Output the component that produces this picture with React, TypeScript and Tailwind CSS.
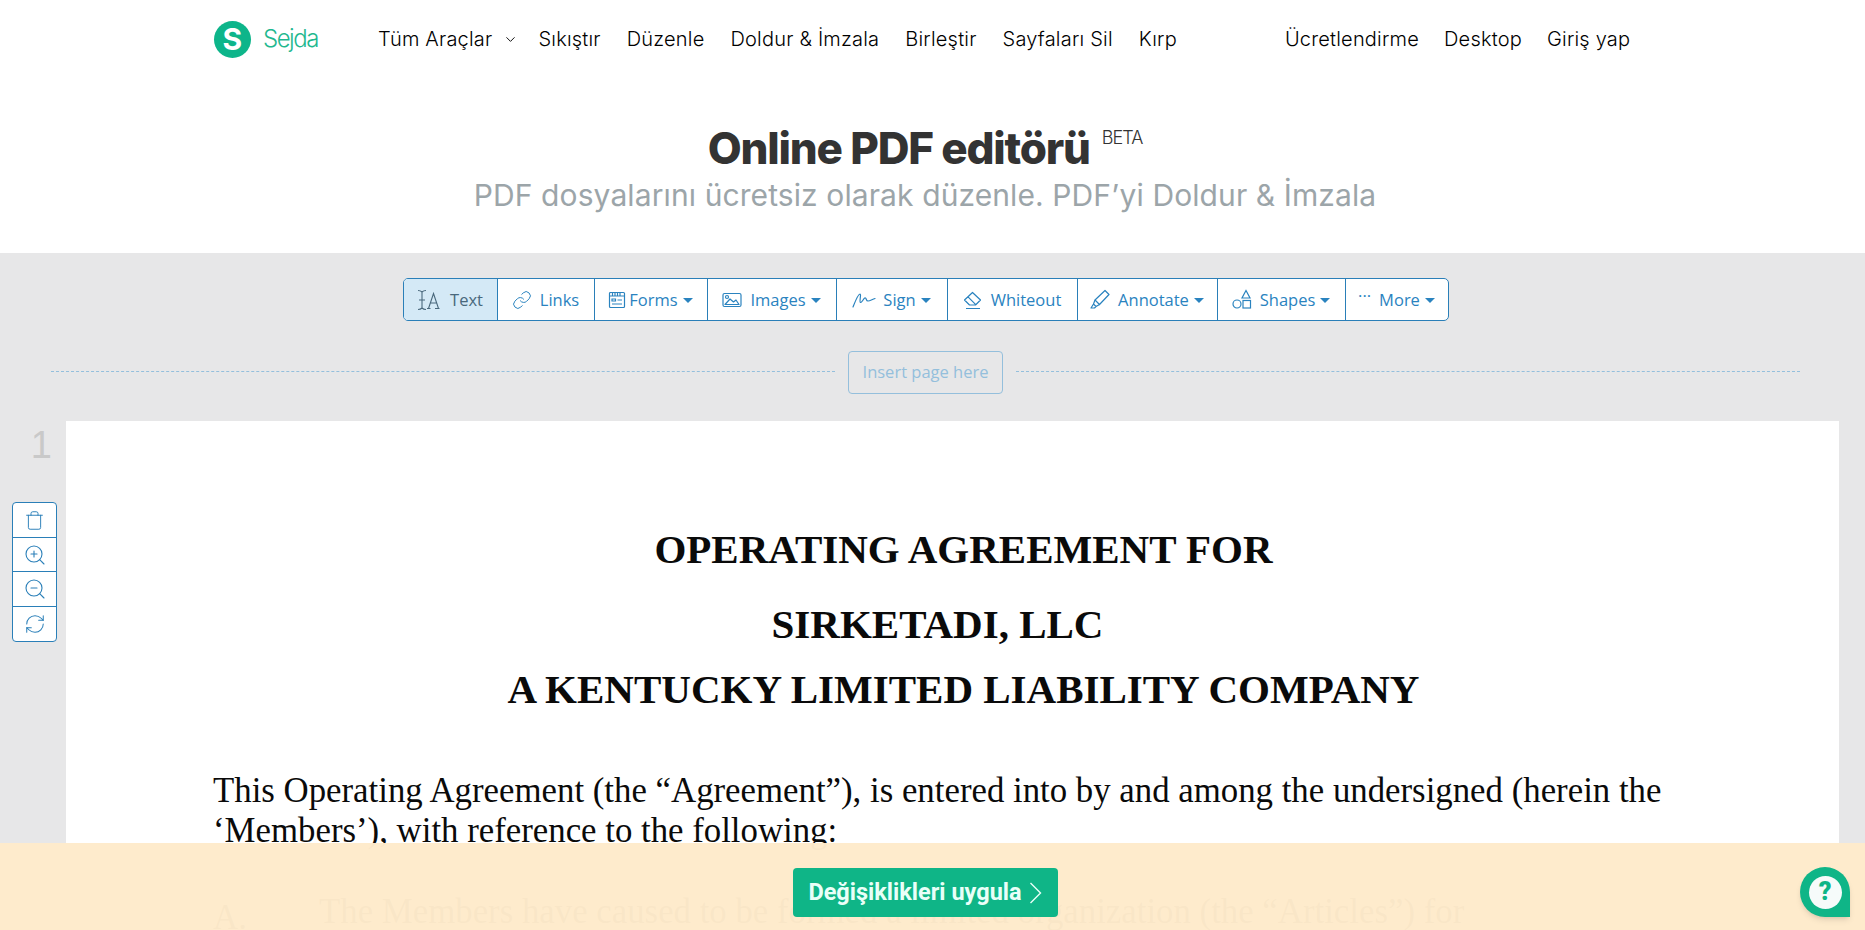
import { ChevronDown, Link as LinkIcon, RefreshCw, Trash, ZoomIn, ZoomOut } from "lucide-react";
import type { ReactNode } from "react";

const navLinks = ["Sıkıştır", "Düzenle", "Doldur & İmzala", "Birleştir", "Sayfaları Sil", "Kırp"];
const rightLinks = ["Ücretlendirme", "Desktop", "Giriş yap"];

const TextIcon = () => (
  <svg width="23" height="22" viewBox="0 0 23 22" fill="none" stroke="currentColor" strokeWidth="1.100">
    <path d="M1 1.500c2 0 3 .5 4 1.500 1-1 2-1.500 4-1.500M5 3v16M1 20.500c2 0 3-.5 4-1.500 1 1 2 1.500 4 1.500M2 11h6" />
    <path d="M10 19.500h3.500M18 19.500h4.500M11.500 19.500l5-15 5 15M13.200 14h6.600" />
  </svg>
);

const FormsIcon = () => (
  <svg width="18" height="18" viewBox="0 0 18 18" fill="none" stroke="currentColor" strokeWidth="1.200">
    <rect x="1.500" y="1.500" width="15" height="15" rx="1" />
    <path d="M1.500 5h15M4.500 1.500V5M7 1.500V5M9.500 1.500V5M12 1.500V5M4 8h3.500v2H4zM9.500 9H14M4 13h10" />
  </svg>
);

const ImagesIcon = () => (
  <svg width="20" height="16" viewBox="0 0 20 16" fill="none" stroke="currentColor" strokeWidth="1.200" strokeLinejoin="round">
    <rect x="1" y="1.500" width="18" height="13" rx="1.500" />
    <circle cx="5" cy="5" r="1.500" />
    <path d="M3 12.500 8 7l3.500 3 2.500-2 3 4.500z" />
  </svg>
);

const SignIcon = () => (
  <svg width="24" height="18" viewBox="0 0 24 18" fill="none" stroke="currentColor" strokeWidth="1.200" strokeLinecap="round">
    <path d="M1 16C3 11 6 3 8 3c1.500 0-1 8 .5 8.500C10 12 12 6 13.500 7c1 .5.5 3 2.500 3 2 0 4-1.500 7-2.500" />
  </svg>
);

const EraserIcon = () => (
  <svg width="20" height="20" viewBox="0 0 20 20" fill="none" stroke="currentColor" strokeWidth="1.200" strokeLinejoin="round">
    <path d="M1.500 10 9.500 2.500l8 7.500-5 5H6.500zM5 6.800l8 8M3 18.500h14" />
  </svg>
);

const PenIcon = () => (
  <svg width="20" height="21" viewBox="0 0 20 21" fill="none" stroke="currentColor" strokeWidth="1.200" strokeLinejoin="round">
    <path d="M15 1.500 19 5.500 9.500 15.500 5 11z" />
    <path d="M5 11 3.500 15l2.500 2.500 3.500-2M3.500 15 1 19h3.500l1.500-1.500" />
  </svg>
);

const ShapesIcon = () => (
  <svg width="21" height="21" viewBox="0 0 21 21" fill="none" stroke="currentColor" strokeWidth="1.200">
    <path d="M14 1.500 18 9h-8z" />
    <circle cx="5" cy="15" r="4" />
    <rect x="11" y="11.500" width="7.500" height="7.500" />
  </svg>
);

const Caret = () => (
  <span className="ml-[5px] inline-block h-0 w-0 border-x-[5px] border-t-[5px] border-x-transparent border-t-[#2a83bf]" />
);

type ToolProps = {
  icon: ReactNode;
  label: string;
  gap: string;
  width: string;
  caret?: boolean;
  active?: boolean;
};

const Tool = ({ icon, label, gap, width, caret, active }: ToolProps) => (
  <div
    className={`flex h-full items-center justify-center border-r border-[#2a7fb8] last:border-r-0 ${gap} ${width} ${
      active ? "bg-[#d4e9f6] text-[#49687c]" : "text-[#2a83bf]"
    }`}
  >
    {icon}
    <span className="flex items-center pt-[2px]">
      {label}
      {caret && <Caret />}
    </span>
  </div>
);

const App = () => {
  return (
    <div className="relative h-[930px] w-full overflow-hidden bg-white font-['Inter',sans-serif]">
      <nav className="flex h-[78px] items-center pl-[214px] text-[20px] font-light tracking-[0.2px] text-black">
        <div className="flex w-[164px] items-center gap-[12px]">
          <div className="flex h-[37px] w-[37px] items-center justify-center rounded-full bg-[#0db58a] text-[30px] font-bold text-white">
            S
          </div>
          <span className="text-[24px] tracking-[-1.500px] text-[#1fb88f]">Sejda</span>
        </div>
        <div className="flex items-center gap-[11px]">
          <span>Tüm Araçlar</span>
          <ChevronDown size={15} strokeWidth={1.500} />
        </div>
        <div className="ml-[20px] flex gap-[26px]">
          {navLinks.map((link) => (
            <span key={link}>{link}</span>
          ))}
        </div>
        <div className="ml-[108px] flex gap-[25px]">
          {rightLinks.map((link) => (
            <span key={link}>{link}</span>
          ))}
        </div>
      </nav>

      <div className="flex h-[175px] flex-col items-center pt-[45px] pr-[15px]">
        <div className="flex items-start">
          <h1 className="text-[44px] leading-[50px] font-extrabold tracking-[-1.200px] text-[#333]">Online PDF editörü</h1>
          <span className="mt-[1px] ml-[12px] text-[18px] font-light tracking-[-1px] text-[#333]">BETA</span>
        </div>
        <p className="mt-[2px] text-[30px] leading-[40px] tracking-[0.1px] text-[#9ca5a9]">PDF dosyalarını ücretsiz olarak düzenle. PDF’yi Doldur &amp; İmzala</p>
      </div>

      <div className="h-[677px] bg-[#e7e7e8] font-['Open_Sans',sans-serif]">
        <div className="flex justify-center pt-[25px] pr-[14px]">
          <div className="flex h-[43px] items-center overflow-hidden rounded-[5px] border border-[#2a7fb8] bg-white text-[16.500px]">
            <Tool active icon={<TextIcon />} label="Text" gap="gap-[10px]" width="w-[94px]" />
            <Tool icon={<LinkIcon size={20} strokeWidth={1.200} />} label="Links" gap="gap-[8px]" width="w-[97px]" />
            <Tool icon={<FormsIcon />} label="Forms" gap="gap-[3px]" width="w-[113px]" caret />
            <Tool icon={<ImagesIcon />} label="Images" gap="gap-[8px]" width="w-[129px]" caret />
            <Tool icon={<SignIcon />} label="Sign" gap="gap-[7px]" width="w-[111px]" caret />
            <Tool icon={<EraserIcon />} label="Whiteout" gap="gap-[8px]" width="w-[130px]" />
            <Tool icon={<PenIcon />} label="Annotate" gap="gap-[8px]" width="w-[140px]" caret />
            <Tool icon={<ShapesIcon />} label="Shapes" gap="gap-[7px]" width="w-[128px]" caret />
            <Tool icon={<span className="mb-[6px]">···</span>} label="More" gap="gap-[8px]" width="w-[102px]" caret />
          </div>
        </div>

        <div className="mt-[30px] flex items-center pr-[65px] pl-[51px]">
          <div className="mb-[2px] flex-1 border-t border-dashed border-[#94bfdc]" />
          <div className="mx-[13px] flex h-[43px] w-[155px] items-center justify-center rounded-[4px] border border-[#94bfdc] text-[16.500px] text-[#94bfdc]">
            Insert page here
          </div>
          <div className="mb-[2px] flex-1 border-t border-dashed border-[#94bfdc]" />
        </div>

        <div className="mt-[27px] flex">
          <div className="flex w-[66px] shrink-0 flex-col items-end">
            <span className="mt-[2px] mr-[14px] h-[44px] font-['Liberation_Sans',sans-serif] text-[38px] leading-[44px] text-[#c9c9c9]">1</span>
            <div className="mt-[35px] mr-[9px] flex w-[45px] flex-col rounded-[4px] border border-[#2a7fb8] bg-white text-[#2a7fb8]">
              <div className="flex h-[35px] items-center justify-center border-b border-[#2a7fb8]">
                <Trash size={21} strokeWidth={1.100} />
              </div>
              <div className="flex h-[34px] items-center justify-center border-b border-[#2a7fb8]">
                <ZoomIn size={24} strokeWidth={1.100} />
              </div>
              <div className="flex h-[35px] items-center justify-center border-b border-[#2a7fb8]">
                <ZoomOut size={24} strokeWidth={1.100} />
              </div>
              <div className="flex h-[34px] items-center justify-center">
                <RefreshCw size={22} strokeWidth={1.100} />
              </div>
            </div>
          </div>

          <div className="h-[600px] w-[1773px] bg-white pt-[105px] pl-[22px] font-['Liberation_Serif',serif] text-[#0a0a0a]">
            <div className="text-center text-[41px] leading-[46px] font-bold">
              <p>OPERATING AGREEMENT FOR</p>
              <p className="mt-[29px] pr-[52px]">SIRKETADI, LLC</p>
              <p className="mt-[19px]">A KENTUCKY LIMITED LIABILITY COMPANY</p>
            </div>
            <div className="mt-[59px] pl-[125px] text-[34.800px] leading-[40px]">
              <p>This Operating Agreement (the “Agreement”), is entered into by and among the undersigned (herein the</p>
              <p>‘Members’), with reference to the following:</p>
              <div className="mt-[41px] flex">
                <span className="mt-[6px] w-[106px]">A.</span>
                <p>The Members have caused to be formed a limited organization (the “Articles”) for</p>
              </div>
            </div>
          </div>
        </div>
      </div>

      <div className="absolute inset-x-0 bottom-0 flex h-[87px] items-center justify-center bg-[#feebcb]/[.98] pt-[12px] pr-[15px] font-['Roboto',sans-serif]">
        <div className="flex h-[49px] w-[265px] items-center justify-center gap-[7px] rounded-[4px] bg-[#0fb587] text-[23.500px] font-bold text-[#e9fff8]">
          Değişiklikleri uygula
          <svg width="13" height="24" viewBox="0 0 13 24" fill="none" stroke="currentColor" strokeWidth="1.400">
            <path d="M1.500 2 11.500 12 1.500 22" />
          </svg>
        </div>
      </div>

      <div className="absolute right-[15px] bottom-[13px] flex h-[50px] w-[50px] items-center justify-center rounded-full rounded-br-[6px] bg-[#0fb587] shadow-md">
        <div className="flex h-[33px] w-[33px] items-center justify-center rounded-full bg-[#f6fbfa] font-['Roboto',sans-serif] text-[25px] font-black text-[#0fb587]">
          ?
        </div>
      </div>
    </div>
  );
};

export default App;
